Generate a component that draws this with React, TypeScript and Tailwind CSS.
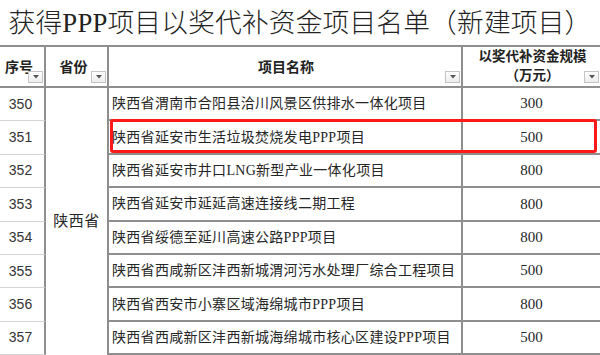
import React from "react";

const rows = [
  { no: "350", name: "陕西省渭南市合阳县洽川风景区供排水一体化项目", amt: "300" },
  { no: "351", name: "陕西省延安市生活垃圾焚烧发电PPP项目", amt: "500" },
  { no: "352", name: "陕西省延安市井口LNG新型产业一体化项目", amt: "800" },
  { no: "353", name: "陕西省延安市延延高速连接线二期工程", amt: "800" },
  { no: "354", name: "陕西省绥德至延川高速公路PPP项目", amt: "800" },
  { no: "355", name: "陕西省西咸新区沣西新城渭河污水处理厂综合工程项目", amt: "500" },
  { no: "356", name: "陕西省西安市小寨区域海绵城市PPP项目", amt: "800" },
  { no: "357", name: "陕西省西咸新区沣西新城海绵城市核心区建设PPP项目", amt: "500" },
];

function Filter() {
  return (
    <div className="absolute right-[1px] bottom-[4px] w-[15px] h-[12px] border border-[#c4c4c4] bg-gradient-to-b from-white to-[#ececec] flex items-center justify-center">
      <svg width="6" height="4" viewBox="0 0 6 4">
        <polygon points="0,0 6,0 3,3.5" fill="#555" />
      </svg>
    </div>
  );
}

export default function App() {
  const serif = "font-['Liberation_Serif','Noto_Sans_CJK_SC',serif]";
  return (
    <div className={`w-[600px] h-[355px] overflow-hidden bg-white text-[#1e1e1e] ${serif} relative`}>
      <div className="h-[45px] flex items-center justify-center text-[26.7px] leading-none pt-[1px] whitespace-nowrap text-[#222] font-light tracking-[0.2px]">
        获得PPP项目以奖代补资金项目名单（新建项目）
      </div>
      <div className="grid grid-cols-[46px_63px_354px_1fr] h-[43px] border-y-2 border-[#8e8e8e] text-[14px] font-bold text-[#222]">
        <div className="relative border-r-2 border-[#8e8e8e] flex items-center pl-[5px]">
          序号
          <Filter />
        </div>
        <div className="relative border-r-2 border-[#8e8e8e] flex items-center justify-center pr-[6px]">
          省份
          <Filter />
        </div>
        <div className="relative border-r-2 border-[#8e8e8e] flex items-center justify-center pl-[2px]">
          项目名称
          <Filter />
        </div>
        <div className="relative flex flex-col items-center justify-center leading-[19px] text-[13.5px] pr-[4px] pl-[6px] pb-[2px]">
          <span className="whitespace-nowrap">以奖代补资金规模</span>
          <span>（万元）</span>
          <Filter />
        </div>
      </div>
      <div className="grid grid-cols-[46px_63px_354px_1fr] grid-rows-[repeat(8,33.4px)] text-[14px]">
        {rows.map((r, i) => (
          <React.Fragment key={r.no}>
            <div
              className="border-r-2 border-r-[#8e8e8e] border-b border-b-[#d4d4d4] flex items-center justify-center pr-[3px] font-['Liberation_Sans',sans-serif] text-[14px] text-[#333]"
              style={{ gridRow: i + 1, gridColumn: 1 }}
            >
              {r.no}
            </div>
            <div
              className="border-r-2 border-[#8e8e8e] border-b-2 flex items-center pl-[3px] tracking-[0.3px] text-[#262626] whitespace-nowrap"
              style={{ gridRow: i + 1, gridColumn: 3 }}
            >
              {r.name}
            </div>
            <div
              className="border-b-2 border-[#8e8e8e] flex items-center justify-center text-[15px] text-[#262626]"
              style={{ gridRow: i + 1, gridColumn: 4 }}
            >
              {r.amt}
            </div>
          </React.Fragment>
        ))}
        <div className="border-r-2 border-[#8e8e8e] flex items-center justify-center text-[15px] tracking-[0.5px] text-[#262626]" style={{ gridRow: "1 / span 8", gridColumn: 2 }}>
          陕西省
        </div>
      </div>
      <div className="absolute left-[110px] top-[119px] w-[487px] h-[34px] border-[3px] border-[#ff1a1a] rounded-[3px]" />
    </div>
  );
}
